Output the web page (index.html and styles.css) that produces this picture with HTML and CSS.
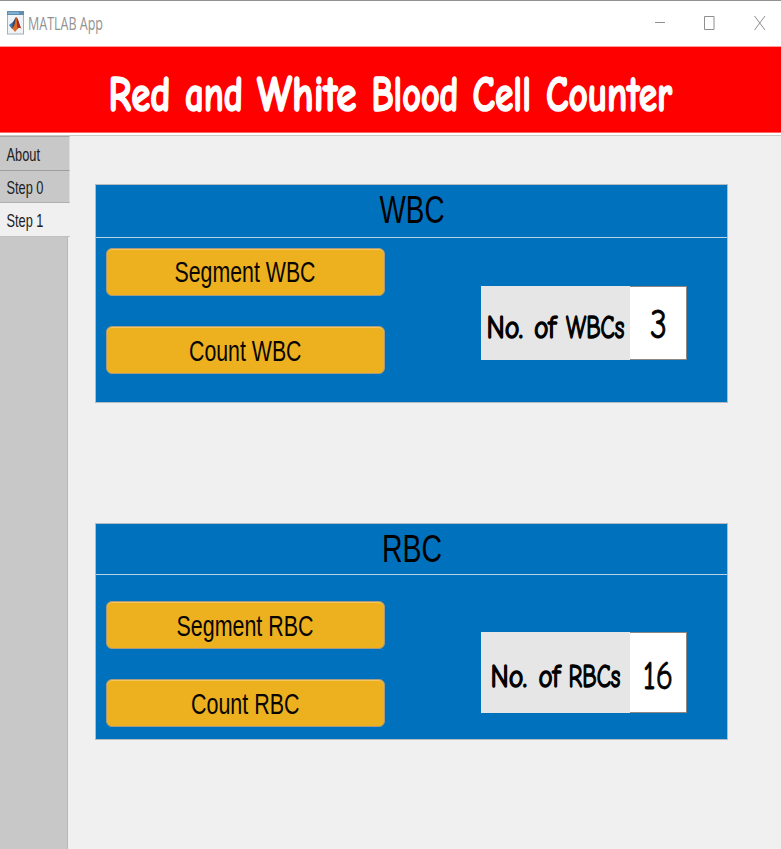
FILE: index.html
```html
<!DOCTYPE html>
<html lang="en">
<head>
<meta charset="utf-8">
<title>MATLAB App</title>
<link rel="stylesheet" href="styles.css">
</head>
<body>
<div class="window">
  <header class="titlebar">
    <svg class="app-icon" width="17" height="24" viewBox="0 0 17 24">
      <rect x=".5" y=".5" width="16" height="22.5" fill="#eef3f8" stroke="#a3b0be"/>
      <path d="M0 0h17v4H0z" fill="#5d8fb5"/><path d="M1 2h11" stroke="#a9cce2"/>
      <path d="M2 14l4-3 2 2-3 5z" fill="#3b79b5"/>
      <path d="M6 11l3-5 1 3-2 8-3 1z" fill="#35435f"/>
      <path d="M9 6c2 1 3 8 5.500 12-2-2-3-1-4 0l-2.500 3-3-4c3-1 3-7 4-11z" fill="#df6b24"/>
      <path d="M9.500 6c2 2 3 8 5 12-2-2-3-1-4 0z" fill="#a52b1c"/>
    </svg>
    <svg class="app-name" width="80" height="44"><text x="0" y="28" textLength="75" lengthAdjust="spacingAndGlyphs">MATLAB App</text></svg>
    <svg class="controls" width="126" height="44" fill="none">
      <path d="M0 20.500h10M49.500 14.500h9.500v13h-9.500zM99.500 14l10.500 14M110 14l-10.500 14"/>
    </svg>
  </header>
  <div class="banner">
    <svg class="comic banner-text" width="781" height="86">
      <text x="108.500" y="64" textLength="62" lengthAdjust="spacingAndGlyphs">Red</text>
      <text x="185" y="64" textLength="58" lengthAdjust="spacingAndGlyphs">and</text>
      <text x="257" y="64" textLength="99.500" lengthAdjust="spacingAndGlyphs">White</text>
      <text x="371.500" y="64" textLength="87" lengthAdjust="spacingAndGlyphs">Blood</text>
      <text x="472.500" y="64" textLength="58.500" lengthAdjust="spacingAndGlyphs">Cell</text>
      <text x="546" y="64" textLength="126" lengthAdjust="spacingAndGlyphs">Counter</text>
    </svg>
  </div>
  <div class="workspace">
    <nav class="tabs">
      <div class="tab about"><svg width="68" height="33"><text x="6.500" y="24" textLength="33.500" lengthAdjust="spacingAndGlyphs">About</text></svg></div>
      <div class="tab"><svg width="68" height="31"><text x="6.500" y="22.500" textLength="37" lengthAdjust="spacingAndGlyphs">Step 0</text></svg></div>
      <div class="tab active"><svg width="68" height="32"><text x="6.500" y="24" textLength="37" lengthAdjust="spacingAndGlyphs">Step 1</text></svg></div>
      <div class="tab-rest"></div>
    </nav>
    <main>
      <section class="panel wbc">
        <h2><svg width="630" height="52"><text x="283.500" y="37.500" textLength="65" lengthAdjust="spacingAndGlyphs">WBC</text></svg></h2>
        <div class="panel-body">
          <div class="buttons">
            <button><svg width="277" height="46"><text x="67.500" y="33" textLength="141" lengthAdjust="spacingAndGlyphs">Segment WBC</text></svg></button>
            <button><svg width="277" height="46"><text x="82" y="33.500" textLength="112.500" lengthAdjust="spacingAndGlyphs">Count WBC</text></svg></button>
          </div>
          <div class="field">
            <svg class="field-label comic" width="149" height="74"><text x="5.500" y="51.500" textLength="36.500" lengthAdjust="spacingAndGlyphs">No.</text><text x="53" y="51.500" textLength="22" lengthAdjust="spacingAndGlyphs">of</text><text x="85" y="51.500" textLength="58.500" lengthAdjust="spacingAndGlyphs">WBCs</text></svg>
            <div class="field-value"><svg class="comic" width="56" height="71"><text x="20" y="51" textLength="17" lengthAdjust="spacingAndGlyphs">3</text></svg></div>
          </div>
        </div>
      </section>
      <section class="panel rbc">
        <h2><svg width="630" height="50"><text x="286" y="37.500" textLength="60" lengthAdjust="spacingAndGlyphs">RBC</text></svg></h2>
        <div class="panel-body">
          <div class="buttons">
            <button><svg width="277" height="46"><text x="69.500" y="33.500" textLength="137" lengthAdjust="spacingAndGlyphs">Segment RBC</text></svg></button>
            <button><svg width="277" height="46"><text x="84" y="33.500" textLength="108.500" lengthAdjust="spacingAndGlyphs">Count RBC</text></svg></button>
          </div>
          <div class="field">
            <svg class="field-label comic" width="149" height="81"><text x="9.500" y="55" textLength="36.500" lengthAdjust="spacingAndGlyphs">No.</text><text x="57.500" y="55" textLength="21.500" lengthAdjust="spacingAndGlyphs">of</text><text x="87.500" y="55" textLength="52" lengthAdjust="spacingAndGlyphs">RBCs</text></svg>
            <div class="field-value"><svg class="comic" width="56" height="78"><text x="13" y="55.500" textLength="30" lengthAdjust="spacingAndGlyphs">16</text></svg></div>
          </div>
        </div>
      </section>
    </main>
  </div>
</div>
</body>
</html>
```
FILE: styles.css
```css
* { box-sizing: border-box; }
body { margin: 0; font-family: "Liberation Sans", Arial, sans-serif; background: #f0f0f0; }
svg { display: block; flex: none; overflow: visible; }
.window { width: 781px; height: 849px; display: flex; flex-direction: column; overflow: hidden; }

.titlebar { height: 47px; flex: none; display: flex; background: #fff; border-top: 1px solid #929292; border-bottom: 1px solid #ff9c9c; padding: 1px 0 0 7px; }
.app-icon { margin-top: 9px; }
.app-name { margin-left: 4px; font: 18.5px "Open Sans", "Noto Sans", sans-serif; fill: #929292; }
.controls { margin-left: auto; stroke: #8f8f8f; stroke-width: 1; }

.banner { height: 89px; flex: none; background: #f00; border-bottom: 3px solid #fff; box-shadow: inset 0 -1px #f66; }
.comic { font-family: "Comic Sans MS", "Comic Neue", Lato, sans-serif; stroke-linejoin: round; }
.banner-text { font-size: 50px; font-weight: 700; fill: #fff; stroke: #fff; stroke-width: 1.6px; }

.workspace { flex: 1; display: flex; border-top: 1px solid #c8c8c8; margin-top: -1px; }
.tabs { width: 70px; display: flex; flex-direction: column; }
.tab { height: 32px; flex: none; background: #c8c8c8; border-bottom: 1px solid #b0b0b0; border-right: 1px solid #dedede; font-size: 17.8px; fill: #202020; }
.tab.about { height: 35px; border-top: 1px solid #a5a5a5; border-bottom-color: #9d9d9d; }
.tab.active { height: 34px; background: #f0f0f0; border-color: #c0c0c0; border-right: 0; }
.tab-rest { flex: 1; width: 68px; background: #c8c8c8; border-right: 1px solid #b8b8b8; }

main { padding: 48px 0 0 25px; }
.panel { width: 633px; background: #0072bd; border: 1px solid #b4bcc2; }
.panel.wbc { height: 219px; }
.panel.rbc { height: 217px; margin-top: 120px; }
h2 { margin: 0; border-bottom: 1px solid #b5d2e6; font-size: 39.5px; font-weight: 400; }
.panel-body { display: flex; padding-left: 10px; }
.buttons { display: flex; flex-direction: column; width: 279px; padding-top: 10px; gap: 30px; }
.rbc .buttons { padding-top: 26px; gap: 30px; }
button { height: 48px; width: 279px; padding: 0; border: 1px solid #a69a80; border-radius: 6px; background: #edb120; box-shadow: inset 0 1px #f4c65d; font: 29.5px "Liberation Sans", Arial, sans-serif; fill: #080600; }

.field { display: flex; margin: 48px 0 0 96px; height: 74px; }
.rbc .field { margin-top: 57px; height: 81px; }
.field-label { background: #e6e6e6; font-size: 32.5px; font-weight: 400; stroke: #000; stroke-width: 1.5px; }
.field-value { width: 57px; background: #fff; border: 1px solid #8c8782; border-left: 0; font-size: 40px; stroke: #000; stroke-width: .8px; }
```
